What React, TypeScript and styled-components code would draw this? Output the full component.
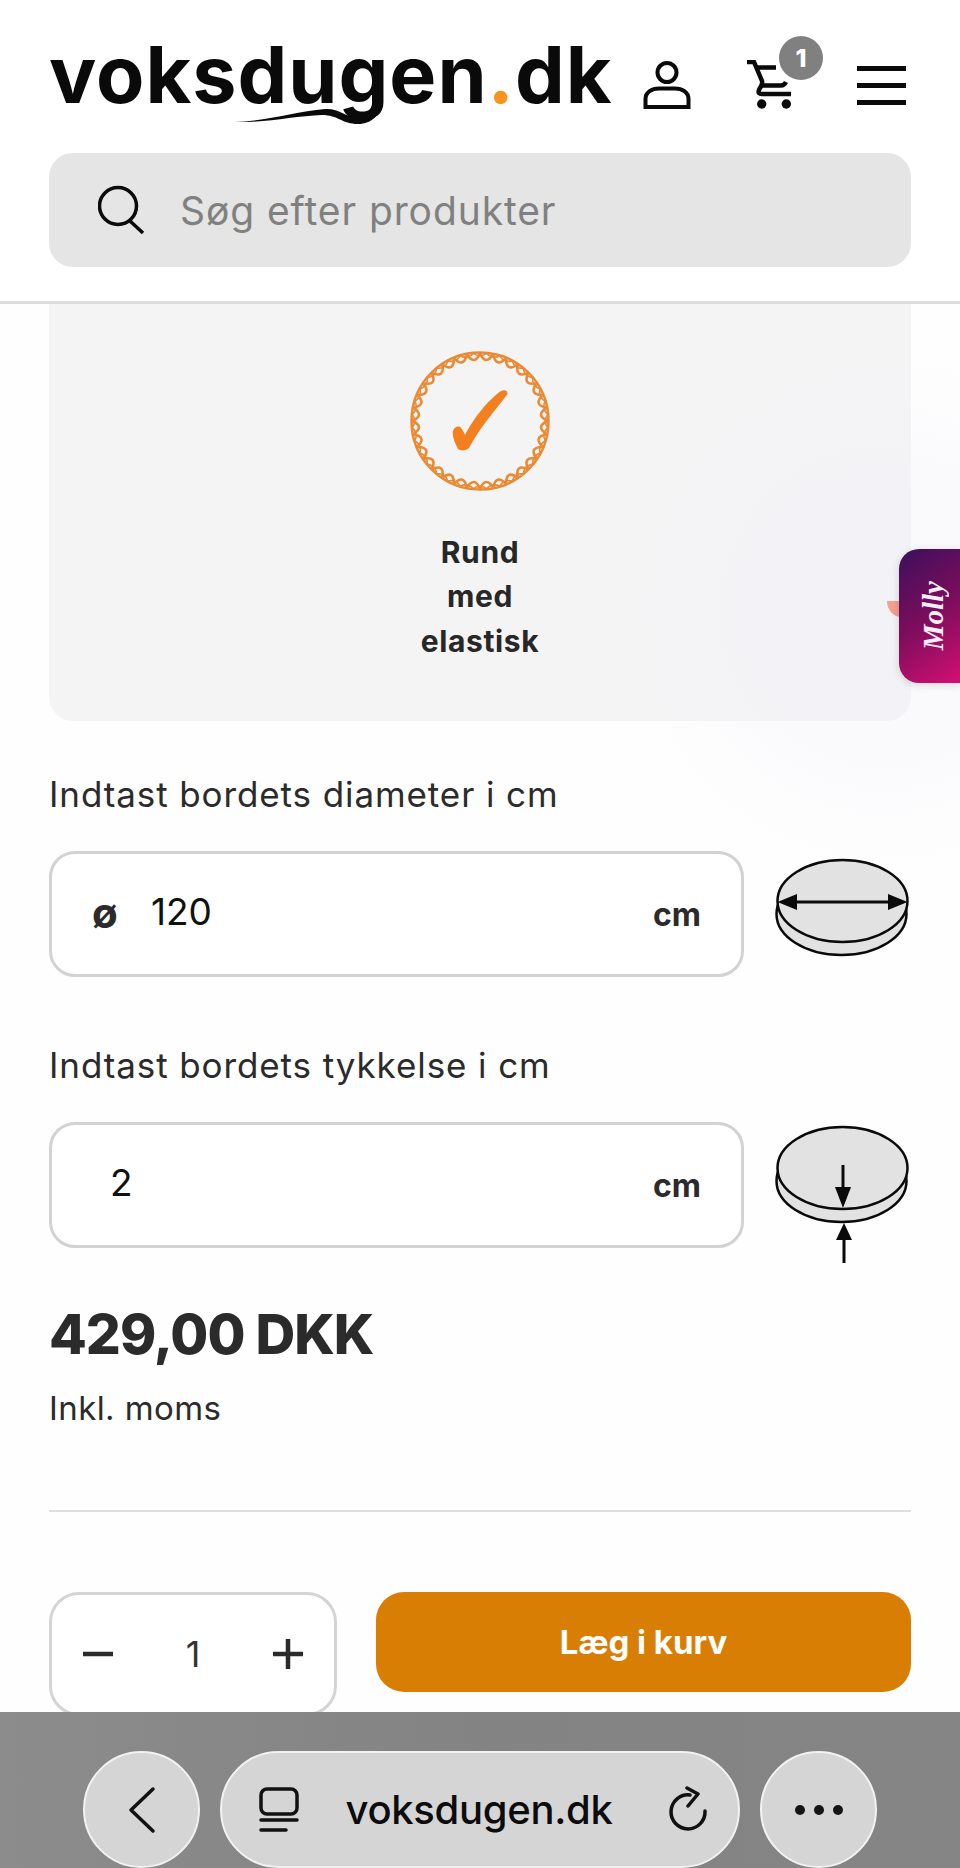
import React from 'react';
import styled, { createGlobalStyle } from 'styled-components';

const GlobalStyle = createGlobalStyle`
  html, body {
    margin: 0;
    padding: 0;
    background: #fff;
  }
  * {
    box-sizing: border-box;
  }
`;

const Page = styled.div`
  position: relative;
  width: 960px;
  height: 1868px;
  overflow: hidden;
  background: #fefefe;
  color: #2b2b2b;
  font-family: Inter, 'Liberation Sans', sans-serif;
`;

const Header = styled.header`
  height: 304px;
  padding-top: 40px;
  border-bottom: 3px solid #dcdcdc;
  background: #fff;
`;

const TopRow = styled.div`
  display: flex;
  align-items: center;
  height: 90px;
  padding-left: 49px;
`;

const Logo = styled.div`
  position: relative;
  width: 594px;
  padding-bottom: 22px;
  font-size: 79px;
  line-height: 90px;
  font-weight: 700;
  letter-spacing: 1px;
  color: #0a0a0a;
`;

const LogoDot = styled.span`
  color: #f7931e;
`;

const Swash = styled.svg`
  position: absolute;
  left: 181px;
  top: 66px;
`;

const CartLink = styled.div`
  position: relative;
  display: flex;
  margin: 0 65px 0 56px;
`;

const CartBadge = styled.span`
  position: absolute;
  left: 32px;
  top: -24px;
  display: flex;
  align-items: center;
  justify-content: center;
  width: 44px;
  height: 44px;
  border-radius: 50%;
  background: #808080;
  color: #fff;
  font-size: 25px;
  font-weight: 800;
`;

const Burger = styled.div`
  display: flex;
  flex-direction: column;
  gap: 12px;
  width: 49px;
`;

const BurgerLine = styled.span`
  height: 5px;
  background: #0a0a0a;
`;

const SearchBar = styled.div`
  display: flex;
  align-items: center;
  gap: 34px;
  height: 114px;
  margin: 23px 49px 0;
  padding-left: 49px;
  border-radius: 24px;
  background: #e5e5e5;
`;

const SearchText = styled.span`
  font-size: 39px;
  letter-spacing: 0.9px;
  color: #808080;
`;

const Content = styled.main`
  padding: 0 49px;
`;

const TypePanel = styled.section`
  display: flex;
  flex-direction: column;
  align-items: center;
  height: 417px;
  padding-top: 47px;
  border-radius: 0 0 24px 24px;
  background: #f4f4f5;
`;

const TypeName = styled.div`
  margin-top: 39px;
  font-size: 30px;
  line-height: 44.4px;
  font-weight: 700;
  letter-spacing: 0.6px;
  text-align: center;
  color: #272727;
`;

const FieldLabel = styled.div<{ $gap: number }>`
  margin-top: ${(p) => p.$gap}px;
  margin-bottom: 37px;
  font-size: 35px;
  line-height: 40px;
  letter-spacing: 0.9px;
`;

const FieldRow = styled.div`
  display: flex;
  align-items: flex-start;
  gap: 30px;
  height: 126px;
`;

const InputBox = styled.div<{ $inset: number }>`
  display: flex;
  align-items: center;
  flex: 0 0 695px;
  height: 126px;
  padding: 0 40px 0 ${(p) => p.$inset}px;
  border: 3px solid #d2d2d2;
  border-radius: 26px;
  background: #fff;
`;

const Prefix = styled.span`
  width: 59px;
  margin-bottom: 4px;
  font-size: 42px;
  font-weight: 700;
`;

const InputValue = styled.span`
  flex: 1;
  margin-bottom: 5px;
  font-size: 37px;
  color: #111;
`;

const Unit = styled.span`
  font-size: 32px;
  font-weight: 700;
`;

const DrumIcon = styled.svg`
  flex: none;
  overflow: visible;
`;

const Price = styled.div`
  margin-top: 56px;
  font-size: 55px;
  line-height: 60px;
  font-weight: 800;
  letter-spacing: -1px;
`;

const PriceNote = styled.div`
  margin-top: 24px;
  font-size: 33px;
  line-height: 40px;
  letter-spacing: 0.4px;
`;

const Divider = styled.hr`
  height: 2px;
  margin: 82px 0 0;
  border: 0;
  background: #dedede;
`;

const Actions = styled.div`
  display: flex;
  align-items: flex-start;
  gap: 39px;
  margin-top: 80px;
`;

const Stepper = styled.div`
  display: flex;
  align-items: center;
  justify-content: space-between;
  flex: 0 0 288px;
  height: 124px;
  padding: 0 31px;
  border: 3px solid #d4d4d4;
  border-radius: 30px;
  background: #fff;
`;

const StepperValue = styled.span`
  font-size: 36px;
  color: #333;
`;

const AddButton = styled.button`
  flex: 1;
  height: 100px;
  border: 0;
  border-radius: 28px;
  background: #d97e05;
  color: #fff;
  font-family: inherit;
  font-size: 33px;
  font-weight: 700;
`;

const Rings = styled.div`
  position: absolute;
  left: 625px;
  top: 350px;
  width: 520px;
  height: 520px;
  background: radial-gradient(circle closest-side, rgba(240, 240, 250, 0.35) 0%, rgba(240, 240, 250, 0.25) 60%, rgba(240, 240, 250, 0) 100%);
  pointer-events: none;
`;

const MollyPeek = styled.div`
  position: absolute;
  left: 887px;
  top: 601px;
  width: 14px;
  height: 16px;
  border-bottom-left-radius: 100%;
  background: #f0a18f;
`;

const MollyTab = styled.div`
  position: absolute;
  right: 0;
  top: 549px;
  display: flex;
  align-items: center;
  justify-content: center;
  width: 61px;
  height: 134px;
  padding-left: 8px;
  border-radius: 20px 0 0 20px;
  background: linear-gradient(145deg, #3c0f5c 0%, #7c0d5c 50%, #d40f72 100%);
  box-shadow: 0 2px 8px rgba(0, 0, 0, 0.15);
`;

const MollyText = styled.span`
  writing-mode: vertical-rl;
  transform: rotate(180deg);
  font-family: 'Liberation Serif', serif;
  font-style: italic;
  font-weight: 700;
  font-size: 29px;
  color: #f7eef5;
`;

const BrowserBar = styled.nav`
  position: absolute;
  left: 0;
  right: 0;
  bottom: 0;
  display: flex;
  gap: 20px;
  height: 156px;
  padding: 39px 83px 0;
  background: linear-gradient(90deg, #8c8c8c 0%, #838383 50%, #858585 100%);
`;

const RoundButton = styled.div`
  display: flex;
  align-items: center;
  justify-content: center;
  flex: 0 0 117px;
  height: 117px;
  border: 2px solid #f2f2f2;
  border-radius: 50%;
  background: #d5d5d5;
`;

const UrlPill = styled.div`
  display: flex;
  align-items: center;
  justify-content: space-between;
  flex: 1;
  height: 117px;
  padding: 0 27px 0 36px;
  border: 2px solid #f2f2f2;
  border-radius: 59px;
  background: #d5d5d5;
`;

const UrlText = styled.span`
  margin-right: 9px;
  font-size: 40px;
  font-weight: 500;
  letter-spacing: -0.3px;
  color: #0c0c0c;
`;

const Dots = styled.div`
  display: flex;
  gap: 9px;
`;

const Dot = styled.span`
  width: 10px;
  height: 10px;
  border-radius: 50%;
  background: #151515;
`;

// round chain border of the cover-type badge
function chainPath(radius: number, bulge: number, count: number, offset: number) {
  let d = '';
  for (let i = 0; i < count; i++) {
    const a0 = ((i + offset) / count) * Math.PI * 2;
    const a1 = ((i + 1 + offset) / count) * Math.PI * 2;
    const am = (a0 + a1) / 2;
    const r2 = radius - bulge;
    d += `M${70 + radius * Math.cos(a0)} ${70 + radius * Math.sin(a0)} `;
    d += `Q${70 + r2 * Math.cos(am)} ${70 + r2 * Math.sin(am)} ${70 + radius * Math.cos(a1)} ${70 + radius * Math.sin(a1)} `;
  }
  return d;
}

function CheckBadge() {
  return (
    <svg width="140" height="140" viewBox="0 0 140 140" fill="none">
      <circle cx="70" cy="70" r="68.5" stroke="#e98a35" strokeWidth="2.5" />
      <path d={chainPath(68, 13, 32, 0)} stroke="#e98a35" strokeWidth="2.6" />
      <path d={chainPath(68, 5, 32, 0.5)} stroke="#e98a35" strokeWidth="1.6" />
      <path
        d="M42.7 82C43 76 49 74 51 77C53 79 54 82 55 84C60 74 74 52 91 40C95 38 98 40 97.5 43C88 56 70 76 59 97C56 100 50 100 48 98C45 92 43 88 42.7 82Z"
        fill="#f47f1e"
      />
    </svg>
  );
}

function DrumBody({ cy }: { cy: number }) {
  return (
    <>
      <ellipse cx="67.5" cy={cy + 13} rx="65" ry="41" fill="#e2e2e2" stroke="#0a0a0a" strokeWidth="2.5" />
      <ellipse cx="68.5" cy={cy} rx="65" ry="41" fill="#e2e2e2" stroke="#0a0a0a" strokeWidth="2.5" />
    </>
  );
}

function DiameterDrum() {
  return (
    <DrumIcon width="140" height="126" viewBox="0 0 140 126" fill="none">
      <DrumBody cy={50} />
      <path d="M20 51H118" stroke="#0a0a0a" strokeWidth="3" />
      <path d="M3.5 51L23 43V59Z" fill="#0a0a0a" />
      <path d="M133.5 51L114 43V59Z" fill="#0a0a0a" />
    </DrumIcon>
  );
}

function ThicknessDrum() {
  return (
    <DrumIcon width="140" height="126" viewBox="0 0 140 126" fill="none">
      <DrumBody cy={46} />
      <path d="M69 43V70" stroke="#0a0a0a" strokeWidth="3" />
      <path d="M69 86L61 65H77Z" fill="#0a0a0a" />
      <path d="M70 101L62 118H78Z" fill="#0a0a0a" />
      <path d="M70 115V141" stroke="#0a0a0a" strokeWidth="3" />
    </DrumIcon>
  );
}

export default function App() {
  return (
    <Page>
      <GlobalStyle />
      <Header>
        <TopRow>
          <Logo>
            voksdugen<LogoDot>.</LogoDot>dk
            <Swash width="155" height="34" viewBox="230 95 155 34" fill="none">
              <path
                d="M235 122C265 121 295 112 325 109C340 108 345 118 358 117C368 116 372 110 373 100L381 100C381 115 372 124 358 124C342 124 338 115 322 115C295 116 265 123 235 122Z"
                fill="#0a0a0a"
              />
            </Swash>
          </Logo>
          <svg width="48" height="48" viewBox="0 0 48 48" fill="none" stroke="#0a0a0a" strokeWidth="4">
            <circle cx="24" cy="11.5" r="9.5" />
            <path d="M2.5 46V38C2.5 31 9 27.5 16 27.5H32C39 27.5 45.5 31 45.5 38V46Z" />
          </svg>
          <CartLink>
            <svg width="45" height="50" viewBox="0 0 45 50" fill="none" stroke="#0a0a0a" strokeWidth="4.5">
              <path d="M0 2H7L15 21C16 25 13 27 12 30C11 33 12 34 15 34H44" />
              <path d="M9 7.5H29M15 25.5H34C37 25.5 38 24 39 22" />
              <circle cx="14.7" cy="44" r="4.7" fill="#0a0a0a" stroke="none" />
              <circle cx="39.3" cy="44" r="4.7" fill="#0a0a0a" stroke="none" />
            </svg>
            <CartBadge>1</CartBadge>
          </CartLink>
          <Burger>
            <BurgerLine />
            <BurgerLine />
            <BurgerLine />
          </Burger>
        </TopRow>
        <SearchBar>
          <svg width="48" height="50" viewBox="0 0 48 50" fill="none" stroke="#0a0a0a" strokeWidth="3.5">
            <circle cx="20" cy="21" r="18.5" />
            <path d="M32 36L45 48" />
          </svg>
          <SearchText>Søg efter produkter</SearchText>
        </SearchBar>
      </Header>

      <Content>
        <TypePanel>
          <CheckBadge />
          <TypeName>
            Rund
            <br />
            med
            <br />
            elastisk
          </TypeName>
        </TypePanel>

        <FieldLabel $gap={53}>Indtast bordets diameter i cm</FieldLabel>
        <FieldRow>
          <InputBox $inset={40}>
            <Prefix>ø</Prefix>
            <InputValue>120</InputValue>
            <Unit>cm</Unit>
          </InputBox>
          <DiameterDrum />
        </FieldRow>

        <FieldLabel $gap={68}>Indtast bordets tykkelse i cm</FieldLabel>
        <FieldRow>
          <InputBox $inset={58}>
            <InputValue>2</InputValue>
            <Unit>cm</Unit>
          </InputBox>
          <ThicknessDrum />
        </FieldRow>

        <Price>429,00 DKK</Price>
        <PriceNote>Inkl. moms</PriceNote>
        <Divider />

        <Actions>
          <Stepper>
            <svg width="30" height="30" viewBox="0 0 30 30" stroke="#2b2b2b" strokeWidth="4.5">
              <path d="M0 15H30" />
            </svg>
            <StepperValue>1</StepperValue>
            <svg width="30" height="30" viewBox="0 0 30 30" stroke="#2b2b2b" strokeWidth="4.5">
              <path d="M0 15H30M15 0V30" />
            </svg>
          </Stepper>
          <AddButton>Læg i kurv</AddButton>
        </Actions>
      </Content>

      <Rings />
      <MollyPeek />
      <MollyTab>
        <MollyText>Molly</MollyText>
      </MollyTab>

      <BrowserBar>
        <RoundButton>
          <svg width="28" height="48" viewBox="0 0 28 48" fill="none" stroke="#111" strokeWidth="3.5" strokeLinecap="round" strokeLinejoin="round">
            <path d="M25 3L3 24L25 45" />
          </svg>
        </RoundButton>
        <UrlPill>
          <svg width="42" height="48" viewBox="0 0 42 48" fill="none" stroke="#111" strokeWidth="3.5" strokeLinecap="round">
            <rect x="3" y="3" width="36" height="25" rx="6" />
            <path d="M3 34H39M3 44H28" />
          </svg>
          <UrlText>voksdugen.dk</UrlText>
          <svg width="44" height="48" viewBox="0 0 44 48" fill="none" stroke="#111" strokeWidth="3.5" strokeLinecap="round" strokeLinejoin="round">
            <path d="M38 25A17 17 0 1 1 23 9" />
            <path d="M20 2L31 8L21 20" />
          </svg>
        </UrlPill>
        <RoundButton>
          <Dots>
            <Dot />
            <Dot />
            <Dot />
          </Dots>
        </RoundButton>
      </BrowserBar>
    </Page>
  );
}
